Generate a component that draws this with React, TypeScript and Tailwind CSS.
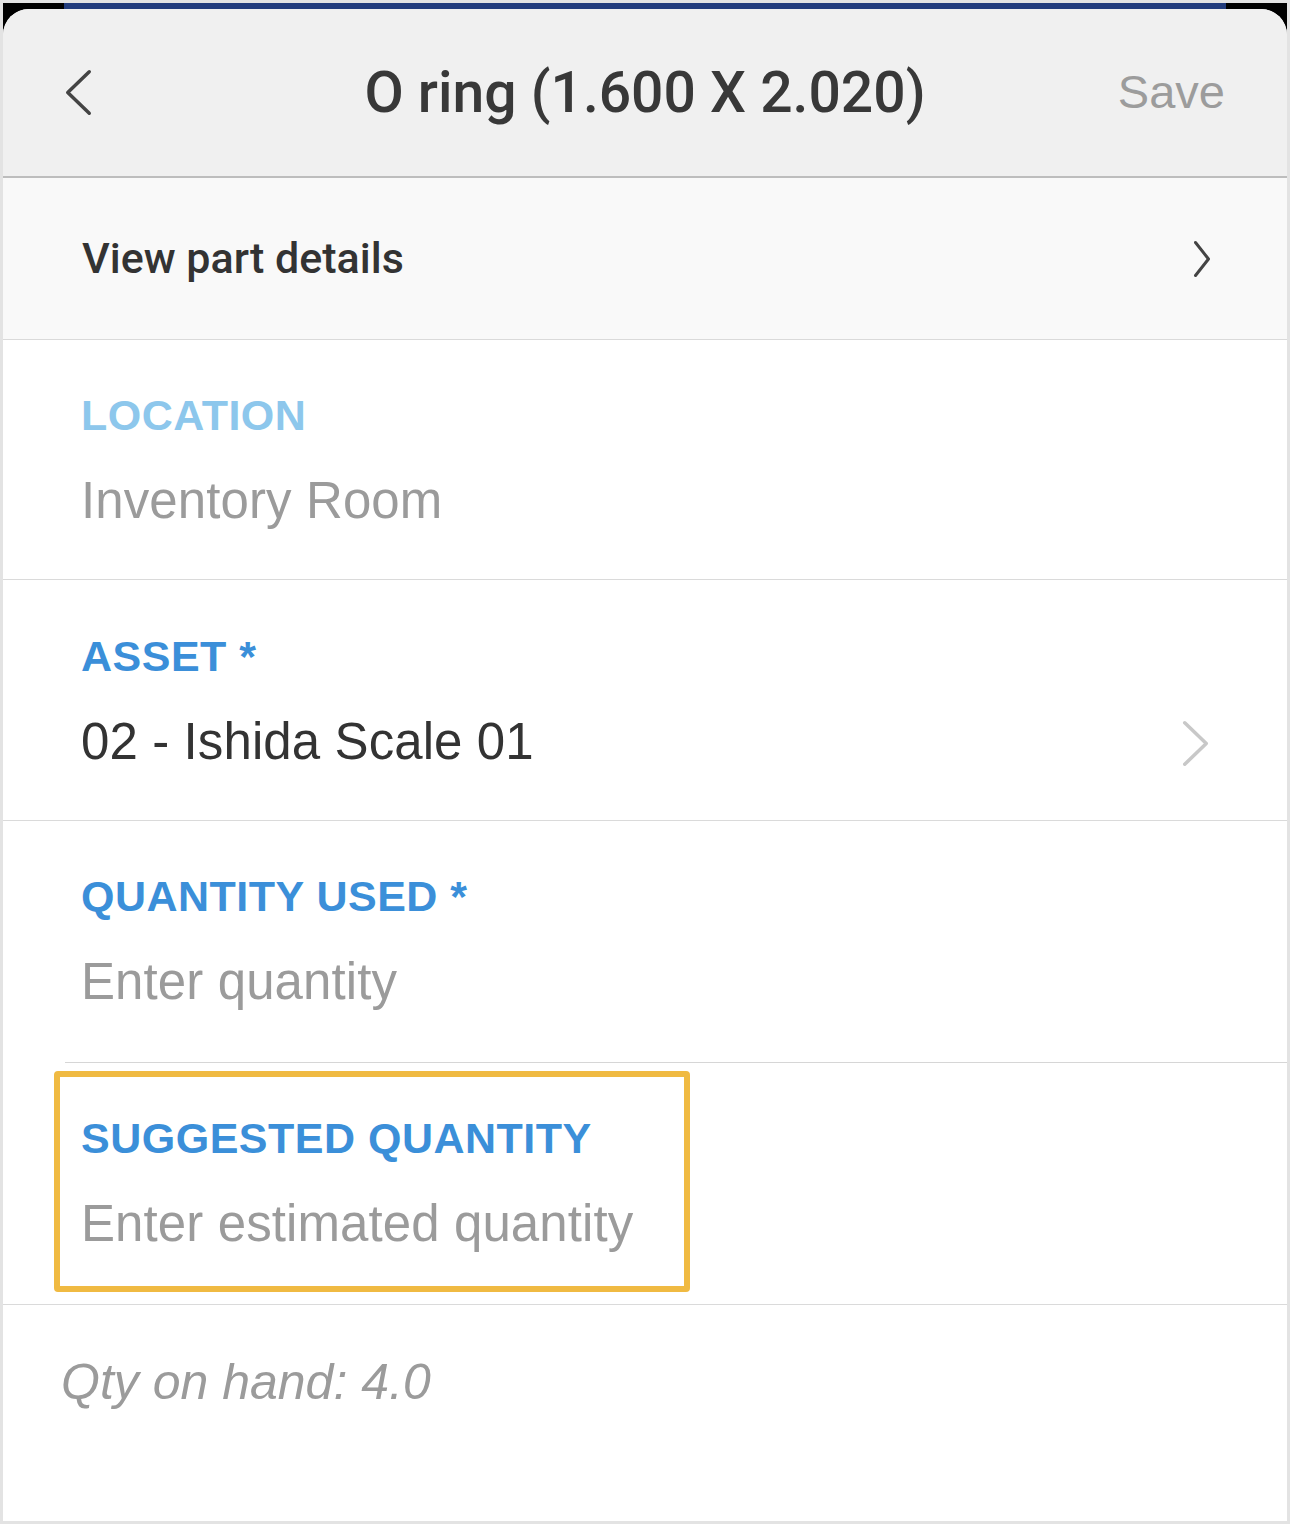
const sans = { fontFamily: '"Liberation Sans", Arial, sans-serif' };
const medium = { fontFamily: 'Roboto, "Liberation Sans", sans-serif' };

function Chevron({ dir, className, color, w, h, stroke }: { dir: 'left' | 'right'; className?: string; color: string; w: number; h: number; stroke: number }) {
  const p = stroke / 2 + 1;
  const pts =
    dir === 'left'
      ? `${w - p},${p} ${p},${h / 2} ${w - p},${h - p}`
      : `${p},${p} ${w - p},${h / 2} ${p},${h - p}`;
  return (
    <svg width={w} height={h} viewBox={`0 0 ${w} ${h}`} className={className}>
      <polyline points={pts} fill="none" stroke={color} strokeWidth={stroke} strokeLinecap="round" strokeLinejoin="round" />
    </svg>
  );
}

function Field({
  label,
  value,
  labelClass,
  valueClass,
  pb = 'pb-[53px]',
  chevron,
}: {
  label: string;
  value: string;
  labelClass: string;
  valueClass: string;
  pb?: string;
  chevron?: boolean;
}) {
  return (
    <div className={`flex items-center pl-[78px] pr-[78px] pt-[54px] ${pb}`}>
      <div className="flex-1 flex flex-col gap-[40px]">
        <div className={`text-[43px] leading-[42px] font-bold tracking-[0.5px] ${labelClass}`} style={sans}>
          {label}
        </div>
        <div className={`text-[51px] leading-[50px] tracking-[0.1px] ${valueClass}`} style={sans}>
          {value}
        </div>
      </div>
      {chevron && <Chevron dir="right" color="#c8c8c8" w={27} h={47} stroke={3.5} className="mt-[86px]" />}
    </div>
  );
}

export default function App() {
  return (
    <div className="w-[1290px] h-[1524px] bg-[#e3e3e3] p-[3px]">
      <div className="h-full bg-black flex flex-col">
        {/* blue strip peeking above the sheet */}
        <div className="h-[6px] ml-[61px] mr-[61px] bg-[#223c7c] shrink-0" />
        <div className="flex-1 bg-white rounded-t-[26px] overflow-hidden flex flex-col">
          {/* Header */}
          <div className="h-[169px] shrink-0 bg-[#f0f0f0] border-b-2 border-[#bdbdbd] grid grid-cols-[1fr_auto_1fr] items-center px-[62px]">
            <Chevron dir="left" color="#444444" w={27} h={47} stroke={3.5} />
            <div className="text-center text-[57px] font-medium text-[#383838]" style={medium}>
              O ring (1.600 X 2.020)
            </div>
            <div className="justify-self-end text-[47px] text-[#9c9c9c]" style={sans}>
              Save
            </div>
          </div>

          {/* View part details */}
          <div className="h-[162px] shrink-0 bg-[#f9f9f9] border-b border-[#dadada] flex items-center pl-[79px] pr-[76px]">
            <div className="flex-1 text-[43px] font-medium text-[#333333]" style={medium}>
              View part details
            </div>
            <Chevron dir="right" color="#444444" w={18} h={38} stroke={3} />
          </div>

          <div className="border-b border-[#dadada]">
            <Field label="LOCATION" value="Inventory Room" labelClass="text-[#8dc7ec]" valueClass="text-[#9b9b9b]" />
          </div>
          <div className="border-b border-[#dadada]">
            <Field label="ASSET *" value="02 - Ishida Scale 01" labelClass="text-[#3b8fd9]" valueClass="text-[#333333]" chevron />
          </div>
          <Field label="QUANTITY USED *" value="Enter quantity" labelClass="text-[#3b8fd9]" valueClass="text-[#9b9b9b]" pb="pb-[55px]" />
          <div className="ml-[62px] h-px bg-[#d6d6d6]" />

          {/* Suggested quantity, highlighted */}
          <div className="relative border-b border-[#dadada]">
            <Field label="SUGGESTED QUANTITY" value="Enter estimated quantity" labelClass="text-[#3b8fd9]" valueClass="text-[#9b9b9b]" pb="pb-[55px]" />
            <div className="absolute left-[51px] top-[8px] w-[636px] h-[221px] border-[6px] border-[#f0ba42] rounded-[4px]" />
          </div>

          {/* Qty on hand */}
          <div className="pl-[58px] pt-[52px] text-[50px] leading-[50px] italic text-[#9b9b9b]" style={sans}>
            Qty on hand: 4.0
          </div>
        </div>
      </div>
    </div>
  );
}
